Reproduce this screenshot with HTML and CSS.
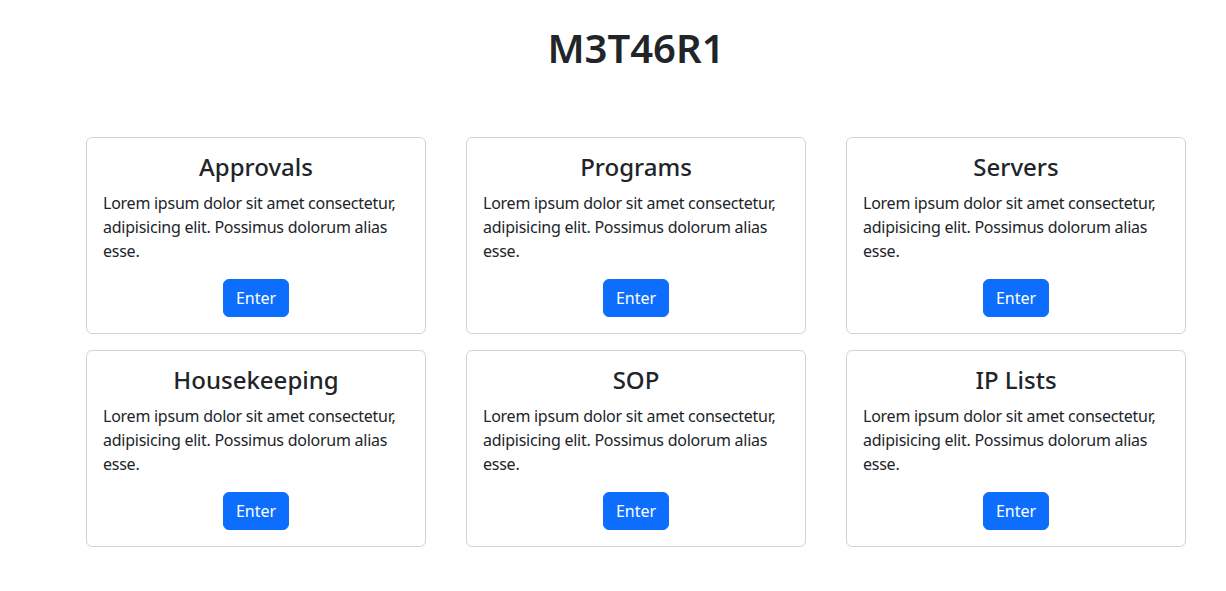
FILE: index.html
```html
<!DOCTYPE html>
<html lang="en">
<head>
<meta charset="utf-8">
<title>M3T46R1</title>
<link rel="stylesheet" href="styles.css">
</head>
<body>
<div class="page">
  <h1 class="title">M3T46R1</h1>
  <div class="grid">
    <div class="card">
      <h4 class="card-title">Approvals</h4>
      <p class="card-text">Lorem ipsum dolor sit amet consectetur, adipisicing elit. Possimus dolorum alias esse.</p>
      <a class="btn" href="#">Enter</a>
    </div>
    <div class="card">
      <h4 class="card-title">Programs</h4>
      <p class="card-text">Lorem ipsum dolor sit amet consectetur, adipisicing elit. Possimus dolorum alias esse.</p>
      <a class="btn" href="#">Enter</a>
    </div>
    <div class="card">
      <h4 class="card-title">Servers</h4>
      <p class="card-text">Lorem ipsum dolor sit amet consectetur, adipisicing elit. Possimus dolorum alias esse.</p>
      <a class="btn" href="#">Enter</a>
    </div>
    <div class="card">
      <h4 class="card-title">Housekeeping</h4>
      <p class="card-text">Lorem ipsum dolor sit amet consectetur, adipisicing elit. Possimus dolorum alias esse.</p>
      <a class="btn" href="#">Enter</a>
    </div>
    <div class="card">
      <h4 class="card-title">SOP</h4>
      <p class="card-text">Lorem ipsum dolor sit amet consectetur, adipisicing elit. Possimus dolorum alias esse.</p>
      <a class="btn" href="#">Enter</a>
    </div>
    <div class="card">
      <h4 class="card-title">IP Lists</h4>
      <p class="card-text">Lorem ipsum dolor sit amet consectetur, adipisicing elit. Possimus dolorum alias esse.</p>
      <a class="btn" href="#">Enter</a>
    </div>
  </div>
</div>
</body>
</html>
```
FILE: styles.css
```css
* { box-sizing: border-box; }
body {
  margin: 0;
  background: #fff;
  color: #212529;
  font-family: "Noto Sans", "DejaVu Sans", sans-serif;
  font-size: 16px;
  line-height: 1.5;
}
.page {
  width: 1100px;
  margin-left: 86px;
}
.title {
  margin: 24px 0 0;
  text-align: center;
  font-size: 40px;
  font-weight: 600;
  line-height: 48px;
}
.grid {
  margin-top: 65px;
  display: grid;
  grid-template-columns: repeat(3, 340px);
  column-gap: 40px;
  row-gap: 16px;
}
.card {
  border: 1px solid rgba(0,0,0,.175);
  border-radius: 6px;
  padding: 16px;
  display: flex;
  flex-direction: column;
  align-items: center;
}
.card-title {
  margin: 0 0 8px;
  font-size: 24px;
  font-weight: 500;
  line-height: 28.8px;
  text-align: center;
  transform: translateY(-1px);
}
.card-text {
  margin: 0 0 16px;
  align-self: stretch;
  letter-spacing: -0.25px;
}
.btn {
  display: inline-block;
  background: #0d6efd;
  color: #fff;
  text-decoration: none;
  border-radius: 6px;
  padding: 6px 12px;
  font-size: 16px;
  line-height: 24px;
  border: 1px solid #0d6efd;
}
```
